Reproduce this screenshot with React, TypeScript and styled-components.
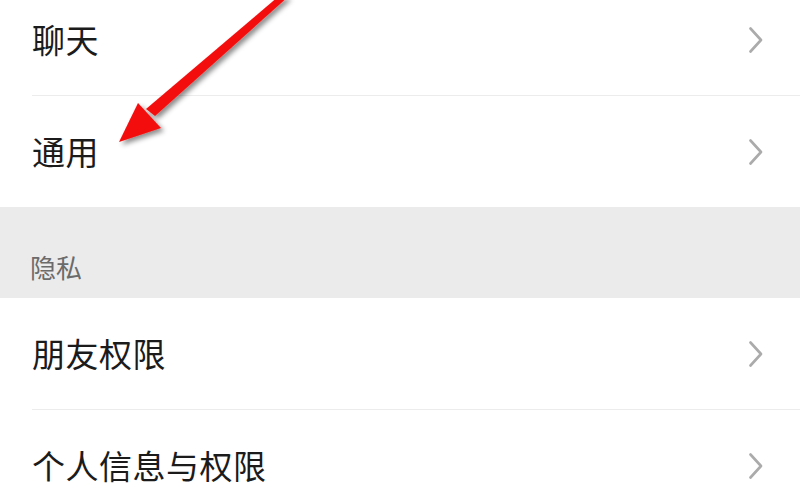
import styled, { createGlobalStyle } from "styled-components";

const GlobalStyle = createGlobalStyle`
  html, body {
    margin: 0;
    padding: 0;
    background: #ffffff;
  }
  body {
    font-family: "Noto Sans CJK SC", "Noto Sans", sans-serif;
  }
`;

const Page = styled.div`
  position: relative;
  width: 800px;
  height: 500px;
  overflow: hidden;
  background: #ffffff;
`;

const List = styled.div`
  margin-top: -16px;
  display: flex;
  flex-direction: column;
`;

const Group = styled.div`
  display: flex;
  flex-direction: column;
  background: #ffffff;
`;

const Row = styled.div<{ $divider?: boolean }>`
  position: relative;
  height: 111px;
  display: flex;
  align-items: center;
  justify-content: space-between;
  padding: 0 37px 0 32px;
  ${(p) =>
    p.$divider &&
    `
    &::after {
      content: "";
      position: absolute;
      left: 32px;
      right: 0;
      bottom: -1px;
      height: 1px;
      background: #ececec;
    }
    margin-bottom: 1px;
  `}
`;

const Label = styled.span`
  font-size: 33px;
  color: #1b1b1b;
  letter-spacing: 0.5px;
  line-height: 1;
`;

const SectionHeader = styled.div`
  height: 91px;
  background: #ebebeb;
  display: flex;
  align-items: flex-end;
  padding: 0 0 18px 30px;
  box-sizing: border-box;
`;

const SectionTitle = styled.span`
  font-size: 26px;
  color: #6b6b6b;
  line-height: 1;
`;

const ArrowLayer = styled.svg`
  position: absolute;
  left: 0;
  top: 0;
  pointer-events: none;
`;

function Chevron() {
  return (
    <svg width="14" height="26" viewBox="0 0 14 26">
      <polyline
        points="1.5,1.5 12,13 1.5,24.5"
        fill="none"
        stroke="#ababab"
        strokeWidth="2.6"
        strokeLinecap="round"
        strokeLinejoin="round"
      />
    </svg>
  );
}

const rows1 = ["聊天", "通用"];
const rows2 = ["朋友权限", "个人信息与权限"];

export default function App() {
  return (
    <>
      <GlobalStyle />
      <Page>
        <List>
          <Group>
            {rows1.map((r, i) => (
              <Row key={r} $divider={i < rows1.length - 1}>
                <Label>{r}</Label>
                <Chevron />
              </Row>
            ))}
          </Group>
          <SectionHeader>
            <SectionTitle>隐私</SectionTitle>
          </SectionHeader>
          <Group>
            {rows2.map((r, i) => (
              <Row key={r} $divider={i < rows2.length - 1}>
                <Label>{r}</Label>
                <Chevron />
              </Row>
            ))}
          </Group>
        </List>

        <ArrowLayer width="800" height="500" viewBox="0 0 800 500">
          <defs>
            <filter id="shadow" x="-20%" y="-20%" width="140%" height="140%">
              <feDropShadow dx="3" dy="3" stdDeviation="2.5" floodColor="#000" floodOpacity="0.45" />
            </filter>
          </defs>
          <g filter="url(#shadow)">
            <polygon points="279,-4 289,-4 155,116 146,109" fill="#f40c0c" />
            <polygon points="119,142 138,103 161,128" fill="#f40c0c" />
          </g>
        </ArrowLayer>
      </Page>
    </>
  );
}
